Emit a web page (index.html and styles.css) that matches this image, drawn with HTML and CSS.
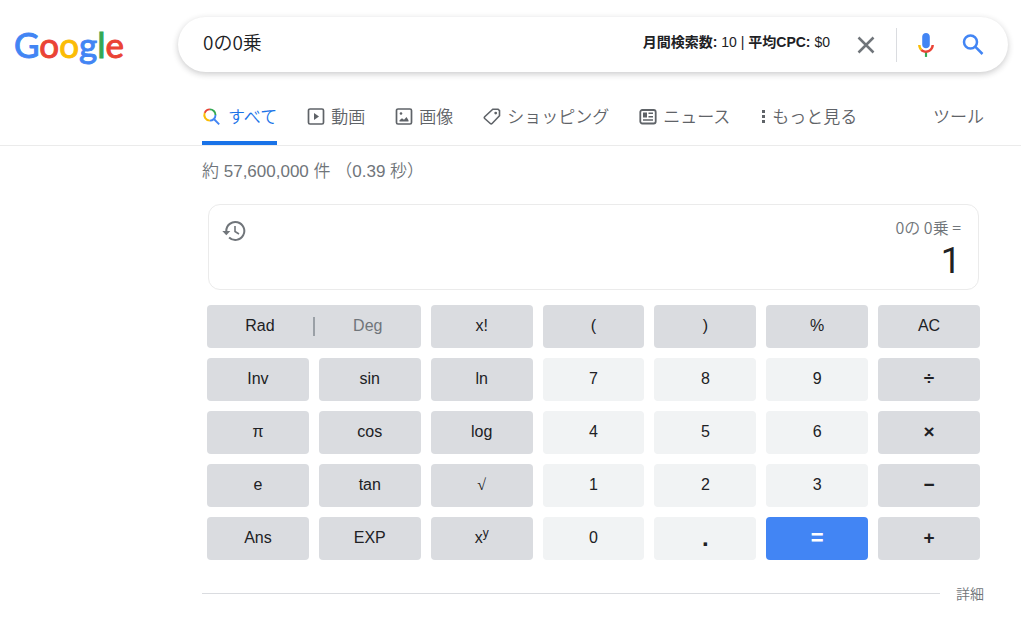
FILE: index.html
```html
<!DOCTYPE html>
<html lang="ja">
<head>
<meta charset="utf-8">
<title>0の0乗 - Google 検索</title>
<meta name="viewport" content="width=device-width, initial-scale=1">
<link rel="stylesheet" href="styles.css">
</head>
<body>
<header class="header">
  <a class="logo" href="#" aria-label="Google"><span class="blue">G</span><span class="red">o</span><span class="yellow">o</span><span class="blue">g</span><span class="green">l</span><span class="red">e</span></a>
  <form class="search" role="search">
    <input class="search-input" type="text" aria-label="検索" value="0の0乗">
    <span class="stats"><b>月間検索数:</b> 10 | <b>平均CPC:</b> $0</span>
    <button class="icon-button clear" type="button" aria-label="クリア">
      <svg width="18" height="18" viewBox="0 0 18 18"><path d="M1.500 1.500l15 15M16.500 1.500l-15 15" fill="none" stroke="#70757a" stroke-width="2.500"/></svg>
    </button>
    <span class="divider"></span>
    <button class="icon-button mic" type="button" aria-label="音声検索">
      <svg width="26" height="26" viewBox="0 0 24 24"><path fill="#4285f4" d="M12 15c2 0 3.500-1.500 3.500-3.300V4.300C15.500 2.500 14 1 12 1S8.500 2.500 8.500 4.300v7.400C8.500 13.500 10 15 12 15z"/><path fill="#34a853" d="M11 18h2v5h-2z"/><path fill="#fbbc04" d="M7 12H4.700c0 2 .9 3.900 2.200 5.200l1.600-1.600C7.500 14.700 7 13.400 7 12z"/><path fill="#ea4335" d="M12 17c-1.400 0-2.600-.5-3.500-1.400l-1.600 1.600C8.200 18.500 10 19.200 12 19.200c4 0 7.300-3.200 7.300-7.200H17c0 2.800-2.200 5-5 5z"/></svg>
    </button>
    <button class="icon-button" type="submit" aria-label="検索">
      <svg width="22" height="22" viewBox="0 0 22 22"><g fill="none" stroke="#4285f4" stroke-width="2.500"><circle cx="8.500" cy="8" r="6.500"/><path d="M13.200 12.700l7.300 7.300"/></g></svg>
    </button>
  </form>
</header>

<nav class="nav">
  <a class="tab tab-active" href="#">
    <svg width="18" height="18" viewBox="0 0 18 18"><g fill="none" stroke-width="1.900"><path stroke="#ea4335" d="M2.700 5.900A5.600 5.600 0 0 1 7.900 2.400"/><path stroke="#34a853" d="M7.900 2.400A5.600 5.600 0 0 1 13.500 8"/><path stroke="#4285f4" d="M13.500 8A5.600 5.600 0 0 1 7.900 13.600M11.900 12l5.300 5.300"/><path stroke="#fbbc04" d="M7.900 13.600A5.600 5.600 0 0 1 2.700 5.900"/></g></svg>
    <span>すべて</span></a>
  <a class="tab" href="#">
    <svg width="18" height="18" viewBox="0 0 18 18"><rect x="1.500" y="2" width="15" height="15" rx="1.500" fill="none" stroke="#5f6368" stroke-width="1.700"/><path fill="#5f6368" d="M7 6v7l5-3.500z"/></svg>
    <span>動画</span></a>
  <a class="tab" href="#">
    <svg width="18" height="18" viewBox="0 0 18 18"><rect x="1.500" y="2" width="15" height="15" rx="1.500" fill="none" stroke="#5f6368" stroke-width="1.700"/><circle cx="6" cy="6.500" r="1.300" fill="#5f6368"/><path fill="#5f6368" d="M4.500 14.500v-1.300l2.500-2 2 1.500 2.500-2.700 2 3.200v1.300z"/></svg>
    <span>画像</span></a>
  <a class="tab" href="#">
    <svg width="18" height="18" viewBox="0 0 18 18"><path d="M9.800 2.200h5.300l1.400 1.400v5.200l-7.400 7.700q-.9.800-1.800 0L1.700 11.500q-.8-.9 0-1.800z" fill="none" stroke="#5f6368" stroke-width="1.600"/><circle cx="12.700" cy="6.100" r="1.400" fill="#5f6368"/></svg>
    <span>ショッピング</span></a>
  <a class="tab" href="#">
    <svg width="18" height="18" viewBox="0 0 18 18"><rect x="1.300" y="3" width="15.400" height="13.500" rx="2" fill="none" stroke="#5f6368" stroke-width="1.800"/><path fill="#5f6368" d="M4 5.500h4v5H4zM9.500 5.500H14V7H9.500zM9.500 9H14v1.500H9.500zM4 12.300h10v1.500H4z"/></svg>
    <span>ニュース</span></a>
  <a class="tab tab-more" href="#">
    <svg width="6" height="18" viewBox="0 0 6 18"><path fill="#5f6368" d="M2 3h3v3H2zM2 8h3v3H2zM2 13h3v3H2z"/></svg>
    <span>もっと見る</span></a>
  <a class="tab tools" href="#">ツール</a>
</nav>

<main class="main">
  <p class="count">約 57,600,000 件 （0.39 秒）</p>
  <section class="calculator" aria-label="電卓">
    <div class="display">
      <button class="icon-button history" type="button" aria-label="履歴">
        <svg width="24" height="22" viewBox="0 0 24 22"><path d="M4.300 11a9 9 0 1 1 2.800 6.500" fill="none" stroke="#70757a" stroke-width="2"/><path fill="#70757a" d="M.3 11h8l-4 4.200z"/><path d="M13 6v5.500l4 2.500" fill="none" stroke="#70757a" stroke-width="1.600"/></svg>
      </button>
      <div class="readout">
        <div class="expression">0の 0乗 =</div>
        <output class="result">1</output>
      </div>
    </div>
    <div class="keys">
      <div class="angle"><button class="angle-mode" type="button">Rad</button><span class="angle-line"></span><button class="angle-mode angle-off" type="button">Deg</button></div>
      <button class="key" type="button">x!</button>
      <button class="key" type="button">(</button>
      <button class="key" type="button">)</button>
      <button class="key" type="button">%</button>
      <button class="key" type="button">AC</button>

      <button class="key" type="button">Inv</button>
      <button class="key" type="button">sin</button>
      <button class="key" type="button">ln</button>
      <button class="key digit" type="button">7</button>
      <button class="key digit" type="button">8</button>
      <button class="key digit" type="button">9</button>
      <button class="key operator" type="button">÷</button>

      <button class="key" type="button">π</button>
      <button class="key" type="button">cos</button>
      <button class="key" type="button">log</button>
      <button class="key digit" type="button">4</button>
      <button class="key digit" type="button">5</button>
      <button class="key digit" type="button">6</button>
      <button class="key operator" type="button">×</button>

      <button class="key" type="button">e</button>
      <button class="key" type="button">tan</button>
      <button class="key root" type="button">√</button>
      <button class="key digit" type="button">1</button>
      <button class="key digit" type="button">2</button>
      <button class="key digit" type="button">3</button>
      <button class="key operator" type="button">−</button>

      <button class="key" type="button">Ans</button>
      <button class="key" type="button">EXP</button>
      <button class="key" type="button">x<sup>y</sup></button>
      <button class="key digit" type="button">0</button>
      <button class="key digit point" type="button">.</button>
      <button class="key equals" type="button">=</button>
      <button class="key operator" type="button">+</button>
    </div>
  </section>
  <div class="more-row"><span class="rule"></span><a class="details" href="#">詳細</a></div>
</main>
</body>
</html>
```
FILE: styles.css
```css
* { box-sizing: border-box; }
body {
  margin: 0;
  background: #fff;
  color: #202124;
  font-family: "Liberation Sans", "Noto Sans CJK JP", sans-serif;
}
a { color: inherit; text-decoration: none; }
button { font: inherit; color: inherit; border: 0; padding: 0; background: none; cursor: pointer; }
svg { display: block; flex: none; }

.header { display: flex; padding: 17px 13px 0 14px; }
.logo {
  width: 164px;
  flex: none;
  font: 400 35px/55px Lato, sans-serif;
  -webkit-text-stroke: 1px currentColor;
}
.blue { color: #4285f4; }
.red { color: #ea4335; }
.yellow { color: #fbbc05; }
.green { color: #34a853; }

.search {
  display: flex;
  align-items: center;
  flex: 1;
  min-width: 0;
  height: 55px;
  padding: 0 24px 0 25px;
  border-radius: 28px;
  box-shadow: 0 2px 6px rgba(32, 33, 36, .24);
}
.search-input {
  flex: 1;
  min-width: 0;
  padding: 0 0 6px;
  border: 0;
  outline: 0;
  background: none;
  color: #202124;
  font: 350 19px/28px "Noto Sans CJK JP", sans-serif;
}
.stats { padding-bottom: 5px; font-size: 14px; line-height: 20px; white-space: nowrap; }
.icon-button { display: flex; align-items: center; justify-content: center; }
.clear { margin-left: 27px; }
.divider { width: 1px; height: 34px; margin: 0 16px 0 21px; background: #dadce0; }
.mic { margin-right: 23px; }

.nav {
  display: flex;
  gap: 30px;
  height: 74px;
  padding: 19px 37px 0 202px;
  border-bottom: 1px solid #ebebeb;
  color: #5f6368;
  font: 350 17px/52px "Noto Sans CJK JP", sans-serif;
}
.tab { display: flex; align-items: center; gap: 6px; white-space: nowrap; border-bottom: 4px solid transparent; }
.tab-active { gap: 8px; color: #1a73e8; border-color: #1a73e8; }
.tools { margin-left: auto; }

.main { padding: 14px 37px 0 202px; }
.count { margin: 0; color: #70757a; font: 350 17px/24px "Liberation Sans", "Noto Sans CJK JP", sans-serif; }
.calculator { padding: 20px 4px 0 5px; }
.display {
  display: flex;
  justify-content: space-between;
  align-items: flex-start;
  margin: 0 1px;
  padding: 11px 17px 5px 13px;
  border: 1px solid #ebebeb;
  border-radius: 12px;
}
.history { padding-top: 4px; }
.readout { text-align: right; }
.expression { color: #70757a; font: 350 16px/22px "Noto Sans CJK JP", sans-serif; }
.result { display: block; font: 400 36px/46px Roboto, sans-serif; }

.keys { display: grid; grid-template-columns: repeat(7, 1fr); grid-auto-rows: 43px; gap: 10px; margin-top: 15px; font-size: 16px; }
.key, .angle { border-radius: 4px; background: #dadce0; }
.key, .angle-mode { padding-bottom: 2px; }
.angle { display: flex; grid-column: span 2; align-items: center; }
.angle-mode { flex: 1; align-self: stretch; }
.angle-off { color: #70757a; }
.angle-line { width: 2px; height: 19px; background: #9aa0a6; }
.digit { background: #f1f3f4; }
.operator { font-size: 19px; font-weight: 700; }
.root { font-family: "Liberation Serif", serif; }
.point { font-size: 24px; font-weight: 700; }
.equals { background: #4285f4; color: #fff; font-size: 22px; font-weight: 700; }
.key sup { font-size: 12px; line-height: 1; }

.more-row { display: flex; align-items: center; gap: 16px; margin-top: 23px; }
.rule { flex: 1; height: 1px; background: #dadce0; }
.details { color: #70757a; font: 350 14px/20px "Noto Sans CJK JP", sans-serif; }
```
